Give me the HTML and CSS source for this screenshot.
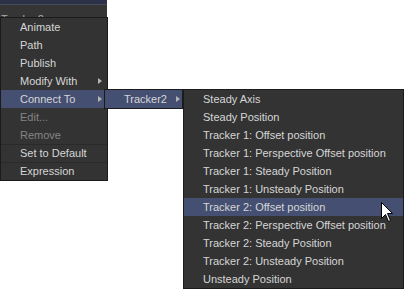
FILE: index.html
```html
<!DOCTYPE html>
<html lang="en">
<head>
  <meta charset="UTF-8" />
  <title>Connect To menu</title>
  <link rel="stylesheet" href="styles.css">
</head>
<body>
  <div class="screen">

    <!-- window behind the popup -->
    <div class="panel">
      <div class="panel-title"></div>
      <div class="panel-body"><span class="panel-label">Tracker2</span></div>
    </div>

    <!-- context menu -->
    <ul class="menu menu-main">
      <li class="item">Animate</li>
      <li class="item">Path</li>
      <li class="item">Publish</li>
      <li class="item">Modify With<span class="arrow"></span></li>
      <li class="item active">Connect To<span class="arrow"></span></li>
      <li class="item disabled">Edit...</li>
      <li class="item disabled">Remove</li>
      <li class="item sep">Set to Default</li>
      <li class="item sep">Expression</li>
    </ul>

    <ul class="menu menu-sub">
      <li class="item active">Tracker2<span class="arrow"></span></li>
    </ul>

    <ul class="menu menu-list">
      <li class="item">Steady Axis</li>
      <li class="item">Steady Position</li>
      <li class="item">Tracker 1: Offset position</li>
      <li class="item">Tracker 1: Perspective Offset position</li>
      <li class="item">Tracker 1: Steady Position</li>
      <li class="item">Tracker 1: Unsteady Position</li>
      <li class="item active">Tracker 2: Offset position</li>
      <li class="item">Tracker 2: Perspective Offset position</li>
      <li class="item">Tracker 2: Steady Position</li>
      <li class="item">Tracker 2: Unsteady Position</li>
      <li class="item">Unsteady Position</li>
    </ul>

    <svg class="cursor" width="13" height="21" viewBox="0 0 13 21">
      <path d="M0.5 0.5 V16.5 L4.5 12.5 L7.5 19.5 L9.5 18.5 L6.5 11.5 H11.5 Z" fill="#fff" stroke="#000" stroke-width="1" stroke-linejoin="miter"/>
    </svg>

  </div>
</body>
</html>
```

FILE: styles.css
```css
body {
  margin: 0;
  background: #fff;
  font-family: 'Liberation Sans', Arial, sans-serif;
  font-size: 11px;
}

.screen {
  position: relative;
  width: 405px;
  height: 289px;
  overflow: hidden;
  background: #fff;
}

/* window behind the menu, only its top edge shows */
.panel {
  width: 107px;
  height: 17px;
  overflow: hidden;
  background: #353535;
}
.panel-title {
  height: 4px;
  background: #2b3247;
  border-bottom: 1px solid #454b5c;
}
.panel-body {
  padding: 9px 0 0 1px;
  color: #aaa;
  line-height: 11px;
}

/* popup menus */
.menu {
  position: absolute;
  margin: 0;
  padding: 0;
  list-style: none;
  background: #333333;
  border: 1px solid #1b1b1b;
  color: #d6d6d6;
}
.menu-main {
  left: 0;
  top: 17px;
  width: 106px;
}
.menu-sub {
  left: 104px;
  top: 89px;
  width: 77px;
}
.menu-list {
  left: 183px;
  top: 89px;
  width: 219px;
}

.item {
  display: flex;
  align-items: center;
  height: 18px;
  padding: 0 5px 0 19px;
  white-space: nowrap;
}
.item.active {
  background: #454f72;
}
.item.disabled {
  color: #858585;
}
.item.sep {
  box-shadow: inset 0 1px 0 #2a2a2a;
}
.menu-sub .item {
  padding-right: 2px;
}

.arrow {
  margin-left: auto;
  width: 0;
  height: 0;
  border-left: 4px solid #b4b4b4;
  border-top: 3.5px solid transparent;
  border-bottom: 3.5px solid transparent;
}

.cursor {
  position: absolute;
  left: 381px;
  top: 202px;
}
```
